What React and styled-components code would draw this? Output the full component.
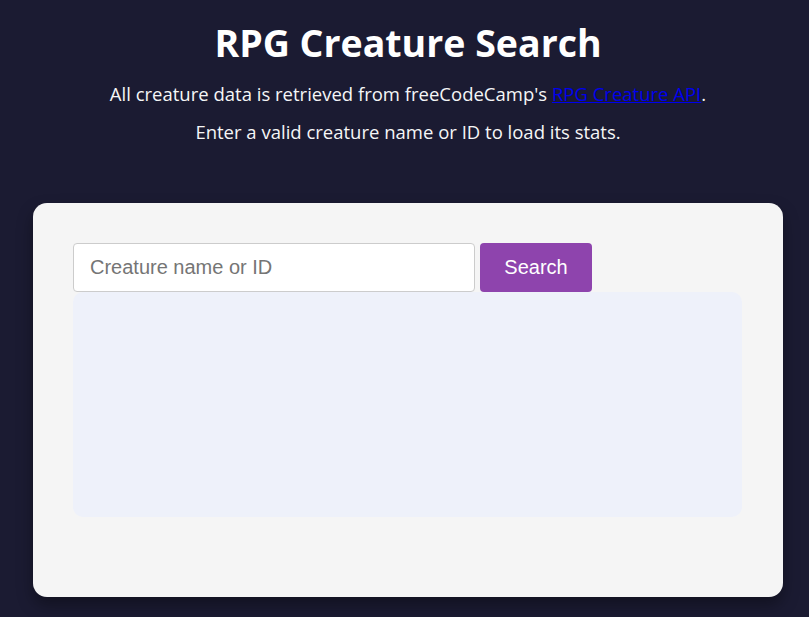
import React, { useState } from 'react';
import styled, { createGlobalStyle } from 'styled-components';

const GlobalStyle = createGlobalStyle`
  html, body {
    margin: 0;
    padding: 0;
    background-color: #1b1b32;
  }
  body {
    font-family: "Open Sans", "Noto Sans", sans-serif;
    color: #f5f6f7;
  }
`;

const Page = styled.main`
  display: flex;
  flex-direction: column;
  align-items: center;
  padding: 20px 0 20px 7px;
`;

const Title = styled.h1`
  margin: 0;
  font-size: 37.5px;
  font-weight: 700;
  line-height: 46px;
  color: #ffffff;
`;

const Intro = styled.p`
  margin: ${(p) => (p.$first ? '16px' : '15px')} 0 0;
  font-size: 18.5px;
  line-height: 23px;
  text-align: center;

  a {
    color: #0000ee;
  }
`;

const Card = styled.section`
  box-sizing: border-box;
  width: 750px;
  height: 394px;
  margin-top: 60px;
  padding: 40px;
  background-color: #f5f5f5;
  border-radius: 14px;
  box-shadow: 0 8px 16px rgba(0, 0, 0, 0.35);
`;

const SearchRow = styled.form`
  display: flex;
  gap: 5px;
`;

const SearchInput = styled.input`
  box-sizing: border-box;
  width: 402px;
  height: 49px;
  padding: 0 16px;
  border: 1px solid #cccccc;
  border-radius: 4px;
  background: #ffffff;
  font-family: "Liberation Sans", Arial, sans-serif;
  font-size: 20px;
  color: #222;
  outline: none;

  &::placeholder {
    color: #757575;
  }
`;

const SearchButton = styled.button`
  box-sizing: border-box;
  width: 112px;
  height: 49px;
  border: none;
  border-radius: 4px;
  background-color: #8e44ad;
  color: #ffffff;
  font-family: "Liberation Sans", Arial, sans-serif;
  font-size: 20px;
  cursor: pointer;
`;

const Results = styled.div`
  width: 669px;
  height: 225px;
  background-color: #eef1fa;
  border-radius: 10px;
`;

export default function App() {
  const [query, setQuery] = useState('');

  return (
    <>
      <GlobalStyle />
      <Page>
        <Title>RPG Creature Search</Title>
        <Intro $first>
          All creature data is retrieved from freeCodeCamp's{' '}
          <a href="#api">RPG Creature API</a>.
        </Intro>
        <Intro>Enter a valid creature name or ID to load its stats.</Intro>
        <Card>
          <SearchRow onSubmit={(e) => e.preventDefault()}>
            <SearchInput
              placeholder="Creature name or ID"
              value={query}
              onChange={(e) => setQuery(e.target.value)}
            />
            <SearchButton type="submit">Search</SearchButton>
          </SearchRow>
          <Results />
        </Card>
      </Page>
    </>
  );
}
